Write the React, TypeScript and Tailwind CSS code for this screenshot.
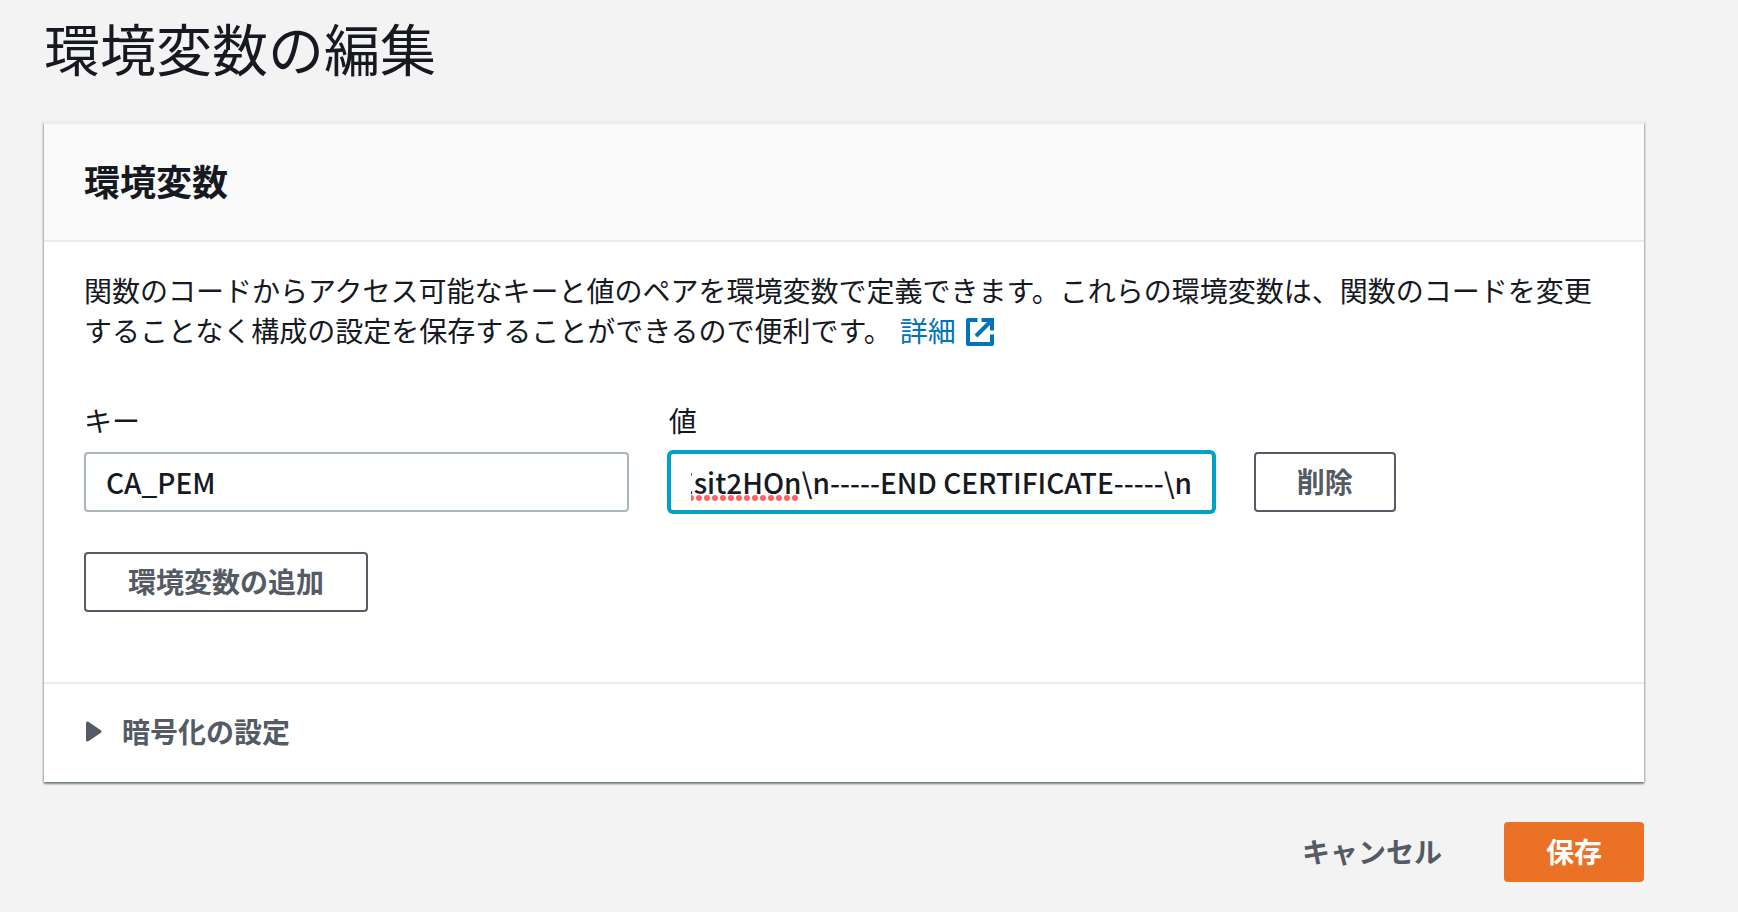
import { useEffect, useRef, useState } from "react";

function ExternalIcon() {
  return (
    <svg viewBox="0 0 28 28" className="ml-[10px] inline-block size-7 align-[-4px]" fill="none" stroke="currentColor" strokeWidth="4" aria-hidden="true">
      <path d="M11.500 2H2v24h24V16.500" strokeLinejoin="round" />
      <path d="M15.500 2H26v10.500M26 2 10 18" />
    </svg>
  );
}

const outlineButton = "h-[60px] rounded-[4px] border-2 border-[#545b64] bg-white pb-[2px] font-bold text-[#545b64]";

export default function App() {
  const [envKey, setEnvKey] = useState("CA_PEM");
  const [envValue, setEnvValue] = useState("Esit2HOn\\n-----END CERTIFICATE-----\\n");
  const valueRef = useRef<HTMLInputElement>(null);

  useEffect(() => {
    const el = valueRef.current;
    if (el) el.scrollLeft = el.scrollWidth;
  }, []);

  return (
    <main className="min-h-screen bg-[#f3f3f3] pr-[94px] pb-[30px] pl-11 font-['Noto_Sans_CJK_JP',sans-serif] text-[28px] leading-10 text-[#16191f]">
      <h1 className="pt-3 text-[56px] leading-[70px]">環境変数の編集</h1>

      <section className="mt-10 bg-white shadow-[0_2px_2px_0_rgba(0,28,36,0.4),1px_1px_2px_0_rgba(0,28,36,0.2),-1px_1px_2px_0_rgba(0,28,36,0.2)]">
        <header className="border-y-2 border-[#eaeded] bg-[#fafafa] px-10 pt-[34px] pb-[38px]">
          <h2 className="text-4xl leading-[44px] font-bold">環境変数</h2>
        </header>

        <div className="px-10 pt-7 pb-[70px]">
          <p>
            関数のコードからアクセス可能なキーと値のペアを環境変数で定義できます。これらの環境変数は、関数のコードを変更することなく構成の設定を保存することができるので便利です。
            <a href="#details" className="ml-2 whitespace-nowrap text-[#0073bb]">
              詳細
              <ExternalIcon />
            </a>
          </p>

          <div className="mt-[50px] grid grid-cols-[14fr_14fr_9fr] items-end gap-x-10">
            <div>
              <label htmlFor="env-key" className="block">キー</label>
              <input
                id="env-key"
                value={envKey}
                onChange={(e) => setEnvKey(e.target.value)}
                className="mt-3 block h-[60px] w-full rounded-[4px] border-2 border-[#aab7b8] bg-white px-5 font-medium outline-none"
              />
            </div>
            <div>
              <label htmlFor="env-value" className="block">値</label>
              <div className="relative mt-3">
                <input
                  id="env-value"
                  ref={valueRef}
                  value={envValue}
                  spellCheck={false}
                  onChange={(e) => setEnvValue(e.target.value)}
                  className="block h-[60px] w-full rounded-[4px] border-2 border-[#00a1c9] bg-white px-5 font-medium shadow-[0_0_0_2px_#00a1c9] outline-none"
                />
                <svg className="pointer-events-none absolute top-[43px] left-[22px] h-[6px] w-[107px]" aria-hidden="true">
                  <line x1="0" y1="3" x2="106" y2="3" stroke="#ff6464" strokeWidth="6" strokeDasharray="0 8" strokeLinecap="round" />
                </svg>
              </div>
            </div>
            <div>
              <button className={`px-[41px] ${outlineButton}`}>削除</button>
            </div>
          </div>

          <button className={`mt-10 block px-[42px] ${outlineButton}`}>環境変数の追加</button>
        </div>

        <div className="border-t-2 border-[#eaeded] px-10 pt-[27px] pb-[31px]">
          <button className="flex items-center font-bold text-[#545b64]" aria-expanded="false">
            <svg viewBox="0 0 20 24" className="mr-[18px] h-6 w-5" fill="currentColor" stroke="currentColor" strokeWidth="3" strokeLinejoin="round" aria-hidden="true">
              <path d="M3.500 4v17L16 12.500z" />
            </svg>
            暗号化の設定
          </button>
        </div>
      </section>

      <div className="mt-10 flex justify-end gap-5">
        <button className="h-[60px] px-[42px] pb-[2px] font-bold text-[#545b64]">キャンセル</button>
        <button className="h-[60px] rounded-[4px] bg-[#ea7125] px-[42px] pb-[2px] font-bold text-white">保存</button>
      </div>
    </main>
  );
}
